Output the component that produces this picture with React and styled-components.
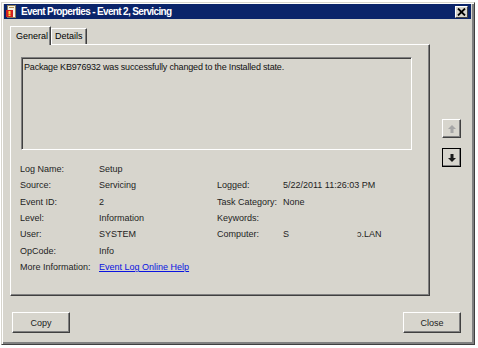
import styled, { createGlobalStyle } from "styled-components";

const Global = createGlobalStyle`
  html, body { margin: 0; padding: 0; background: #fff; }
  body { font-family: "Liberation Sans", Arial, sans-serif; }
`

const leftRows = [
  ["Log Name:", "Setup"],
  ["Source:", "Servicing"],
  ["Event ID:", "2"],
  ["Level:", "Information"],
  ["User:", "SYSTEM"],
  ["OpCode:", "Info"],
]

const rightRows = [
  null,
  ["Logged:", "5/22/2011 11:26:03 PM"],
  ["Task Category:", "None"],
  ["Keywords:", ""],
  ["Computer:", "computer"],
  null,
]

function TitleIcon() {
  return (
    <svg width="11" height="13" viewBox="0 0 11 13">
      <rect x="1.5" y="0.5" width="8" height="12" fill="#f4f1e6" stroke="#8a7d5a" />
      <rect x="3" y="2" width="5" height="1" fill="#b09050" />
      <rect x="0" y="5" width="7" height="7" fill="#d32020" />
      <rect x="2.5" y="6" width="2" height="3.5" fill="#ffe040" />
      <rect x="2.5" y="10" width="2" height="1" fill="#ffe040" />
    </svg>
  )
}

function Arrow({ up, color }) {
  return (
    <svg width="10" height="10" viewBox="0 0 10 10">
      <polygon
        points={up ? "5,1 9,5 6.5,5 6.5,9 3.5,9 3.5,5 1,5" : "5,9 9,5 6.5,5 6.5,1 3.5,1 3.5,5 1,5"}
        fill={color}
      />
    </svg>
  )
}

export default function App() {
  return (
    <Page>
      <Global />
      <Window>
        <TitleBar>
          <TitleIcon />
          <Title>Event Properties - Event 2, Servicing</Title>
          <CloseBox>
            <svg width="9" height="8" viewBox="0 0 9 8">
              <path d="M1 0.5 L8 7.5 M8 0.5 L1 7.5" stroke="#000" strokeWidth="1.8" />
            </svg>
          </CloseBox>
        </TitleBar>

        <Body>
          <Main>
            <Tabs>
              <Tab active>General</Tab>
              <Tab>Details</Tab>
            </Tabs>
            <Panel>
              <MessageBox>
                Package KB976932 was successfully changed to the Installed state.
              </MessageBox>
              <Info>
                {leftRows.map((l, i) => (
                  <Row key={i}>
                    <Label>{l[0]}</Label>
                    <Value>{l[1]}</Value>
                    <Label>{rightRows[i] ? rightRows[i][0] : ""}</Label>
                    <Value>
                      {rightRows[i] && rightRows[i][1] === "computer" ? (
                        <>S<Redacted />ɔ.LAN</>
                      ) : rightRows[i] ? rightRows[i][1] : ""}
                    </Value>
                  </Row>
                ))}
                <Row>
                  <Label>More Information:</Label>
                  <Link href="#">Event Log Online Help</Link>
                </Row>
              </Info>
            </Panel>
          </Main>
          <Side>
            <NavButton disabled><Arrow up color="#a6a6a6" /></NavButton>
            <NavButton><Arrow color="#1a1a1a" /></NavButton>
          </Side>
        </Body>

        <Footer>
          <Button>Copy</Button>
          <Button>Close</Button>
        </Footer>
      </Window>
    </Page>
  );
}

const Page = styled.div`
  width: 478px;
  height: 348px;
  background: #fff;
  padding: 2px 0 0 1px;
  box-sizing: border-box;
`

const Window = styled.div`
  width: 474px;
  height: 343px;
  box-sizing: border-box;
  background: #d7d5cd;
  border: 1px solid #d7d5cd;
  border-right-color: #404040;
  border-bottom-color: #404040;
  box-shadow: inset 1px 1px 0 #fff, inset -2px -2px 0 #808080;
  padding: 1px 3px 0 2px;
  display: flex;
  flex-direction: column;
`

const TitleBar = styled.div`
  height: 15px;
  background: #0a246a;
  display: flex;
  align-items: center;
  padding: 0 3px 0 2px;
  gap: 4px;
`

const Title = styled.div`
  flex: 1;
  color: #fff;
  font-weight: bold;
  font-size: 10px;
  letter-spacing: -0.65px;
  white-space: nowrap;
`

const CloseBox = styled.div`
  width: 13px;
  height: 12px;
  box-sizing: border-box;
  background: #d7d5cd;
  border: 1px solid #fff;
  border-right-color: #404040;
  border-bottom-color: #404040;
  display: flex;
  align-items: center;
  justify-content: center;
`

const Body = styled.div`
  display: flex;
  padding: 6px 0 0 6px;
  gap: 12px;
`

const Main = styled.div`
  width: 420px;
  display: flex;
  flex-direction: column;
`

const Tabs = styled.div`
  display: flex;
  align-items: flex-end;
  height: 19px;
`

const Tab = styled.div`
  font-size: 9px;
  color: #000;
  box-sizing: border-box;
  height: ${({ active }) => (active ? "19px" : "16px")};
  padding: ${({ active }) => (active ? "4px 4px 0 5px" : "2px 4px 0 3px")};
  border: 1px solid #fff;
  border-bottom: none;
  border-right-color: #404040;
  box-shadow: inset -1px 0 0 #808080;
  background: #d7d5cd;
  position: relative;
  margin-bottom: ${({ active }) => (active ? "-1px" : "0")};
  z-index: ${({ active }) => (active ? 1 : 0)};
  width: ${({ active }) => (active ? "41px" : "36px")};
`

const Panel = styled.div`
  height: 252px;
  box-sizing: border-box;
  border: 1px solid #fff;
  border-right-color: #404040;
  border-bottom-color: #404040;
  box-shadow: inset -1px -1px 0 #808080;
  padding: 12px 17px 0 10px;
`

const MessageBox = styled.div`
  height: 93px;
  box-sizing: border-box;
  border: 1px solid #808080;
  border-right-color: #fff;
  border-bottom-color: #fff;
  box-shadow: inset 1px 1px 0 #404040;
  padding: 4px 2px;
  font-size: 9px;
  letter-spacing: -0.18px;
  color: #111;
`

const Info = styled.div`
  padding: 11px 0 0 0;
  margin-left: -1px;
  display: flex;
  flex-direction: column;
`

const Row = styled.div`
  display: grid;
  grid-template-columns: 79px 118px 66px 1fr;
  height: 16.3px;
  align-items: center;
  font-size: 9px;
  color: #1e1e1e;
  white-space: nowrap;
`

const Label = styled.span``

const Value = styled.span``

const Redacted = styled.span`
  display: inline-block;
  width: 68px;
`

const Link = styled.a`
  color: #0a14e0;
  text-decoration: underline;
  grid-column: 2 / 4;
`

const Side = styled.div`
  display: flex;
  flex-direction: column;
  gap: 10px;
  padding-top: 94px;
`

const NavButton = styled.button`
  width: 19px;
  height: 19px;
  padding: 0;
  box-sizing: border-box;
  background: #d7d5cd;
  border: 1px solid #fff;
  border-right-color: #404040;
  border-bottom-color: #404040;
  box-shadow: inset -1px -1px 0 #808080;
  display: flex;
  align-items: center;
  justify-content: center;
  outline: ${({ disabled }) => (disabled ? "none" : "1px solid #000")};
  outline-offset: -1px;
`

const Footer = styled.div`
  margin-top: auto;
  margin-bottom: 11px;
  display: flex;
  justify-content: space-between;
  padding: 0 10px 0 8px;
`

const Button = styled.button`
  width: 58px;
  height: 21px;
  box-sizing: border-box;
  background: #d7d5cd;
  border: 1px solid #fff;
  border-right-color: #404040;
  border-bottom-color: #404040;
  box-shadow: inset -1px -1px 0 #808080;
  font-family: "Liberation Sans", Arial, sans-serif;
  font-size: 9px;
  color: #222;
  padding: 0;
`
